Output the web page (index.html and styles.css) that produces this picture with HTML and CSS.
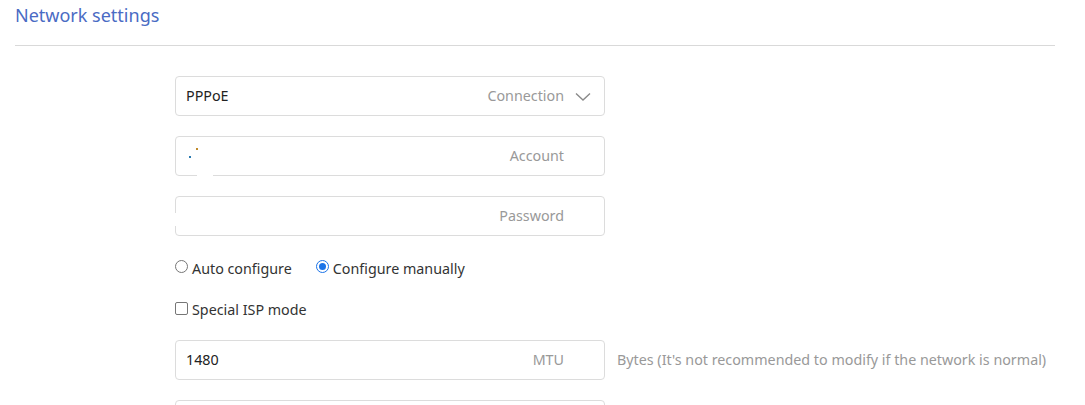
FILE: index.html
```html
<!DOCTYPE html>
<html>
<head>
<meta charset="utf-8">
<link rel="stylesheet" href="styles.css">
</head>
<body>
<div class="page">
  <h1 class="title">Network settings</h1>
  <div class="form">
    <div class="row">
      <div class="field">
        <span class="value">PPPoE</span>
        <span class="label">Connection</span>
        <svg class="chev" width="16" height="10" viewBox="0 0 16 10"><path d="M1 1.5 L8 8 L15 1.5" fill="none" stroke="#8a8a8a" stroke-width="1.4"/></svg>
      </div>
    </div>
    <div class="row">
      <div class="field">
        <span class="value"></span>
        <span class="label">Account</span>
        <span class="mask mask-bottom"></span>
        <span class="dot dot1"></span>
        <span class="dot dot2"></span>
      </div>
    </div>
    <div class="row">
      <div class="field">
        <span class="value"></span>
        <span class="label">Password</span>
        <span class="mask mask-left"></span>
      </div>
    </div>
    <div class="opts">
      <label class="opt"><span class="radio"></span>Auto configure</label>
      <label class="opt"><span class="radio on"></span>Configure manually</label>
    </div>
    <div class="opts isp">
      <label class="opt"><span class="check"></span>Special ISP mode</label>
    </div>
    <div class="row">
      <div class="field">
        <span class="value">1480</span>
        <span class="label">MTU</span>
      </div>
      <span class="hint">Bytes (It's not recommended to modify if the network is normal)</span>
    </div>
    <div class="row">
      <div class="field"></div>
    </div>
  </div>
</div>
</body>
</html>
```
FILE: styles.css
```css
* { box-sizing: border-box; }
html, body { margin: 0; padding: 0; background: #fff; }
body {
  font-family: "Noto Sans", "Noto Sans CJK SC", sans-serif;
  font-size: 14.3px;
  color: #333;
  overflow: hidden;
  height: 405px;
}
.page { padding: 0 30px 0 15px; }
.title {
  margin: 0;
  padding-top: 2px;
  height: 46px;
  font-size: 18px;
  font-weight: normal;
  color: #4a6bc4;
  line-height: 26px;
  border-bottom: 1px solid #d9d9d9;
}
.form {
  padding-left: 160px;
  padding-top: 30px;
}
.row {
  display: flex;
  align-items: center;
  margin-bottom: 20px;
}
.field {
  position: relative;
  width: 430px;
  height: 40px;
  border: 1px solid #dcdcdc;
  border-radius: 4px;
  display: flex;
  align-items: center;
  padding: 0 40px 2px 10px;
  flex-shrink: 0;
}
.value { flex: 1; color: #222; }
.label { color: #999; }
.chev { position: absolute; right: 13px; top: 15px; }
.hint { margin-left: 12px; color: #999; white-space: nowrap; padding-bottom: 2px; }
.mask { position: absolute; background: #fff; }
.mask-bottom { left: 21px; bottom: -2px; width: 16px; height: 4px; }
.mask-left { left: -2px; top: 16px; width: 4px; height: 13px; }
.dot { position: absolute; width: 2px; height: 2px; }
.dot1 { left: 20px; top: 11px; background: #c08a2a; }
.dot2 { left: 13px; top: 19px; background: #2a7ab0; }
.opts {
  display: flex;
  gap: 24px;
  height: 24px;
  align-items: center;
}
.opts.isp { margin-top: 17px; margin-bottom: 19px; }
.opt { display: flex; align-items: center; color: #333; }
.radio {
  width: 13px; height: 13px;
  border: 1px solid #767676;
  border-radius: 50%;
  margin-right: 4px;
  margin-top: -4px;
  position: relative;
}
.radio.on { border: 1px solid #1a73e8; background: #fff; }
.radio.on::after {
  content: "";
  position: absolute;
  left: 2px; top: 2px;
  width: 7px; height: 7px;
  border-radius: 50%;
  background: #1a73e8;
}
.check {
  width: 13px; height: 13px;
  border: 1px solid #767676;
  border-radius: 2px;
  margin-right: 4px;
  margin-top: -2px;
}
```
